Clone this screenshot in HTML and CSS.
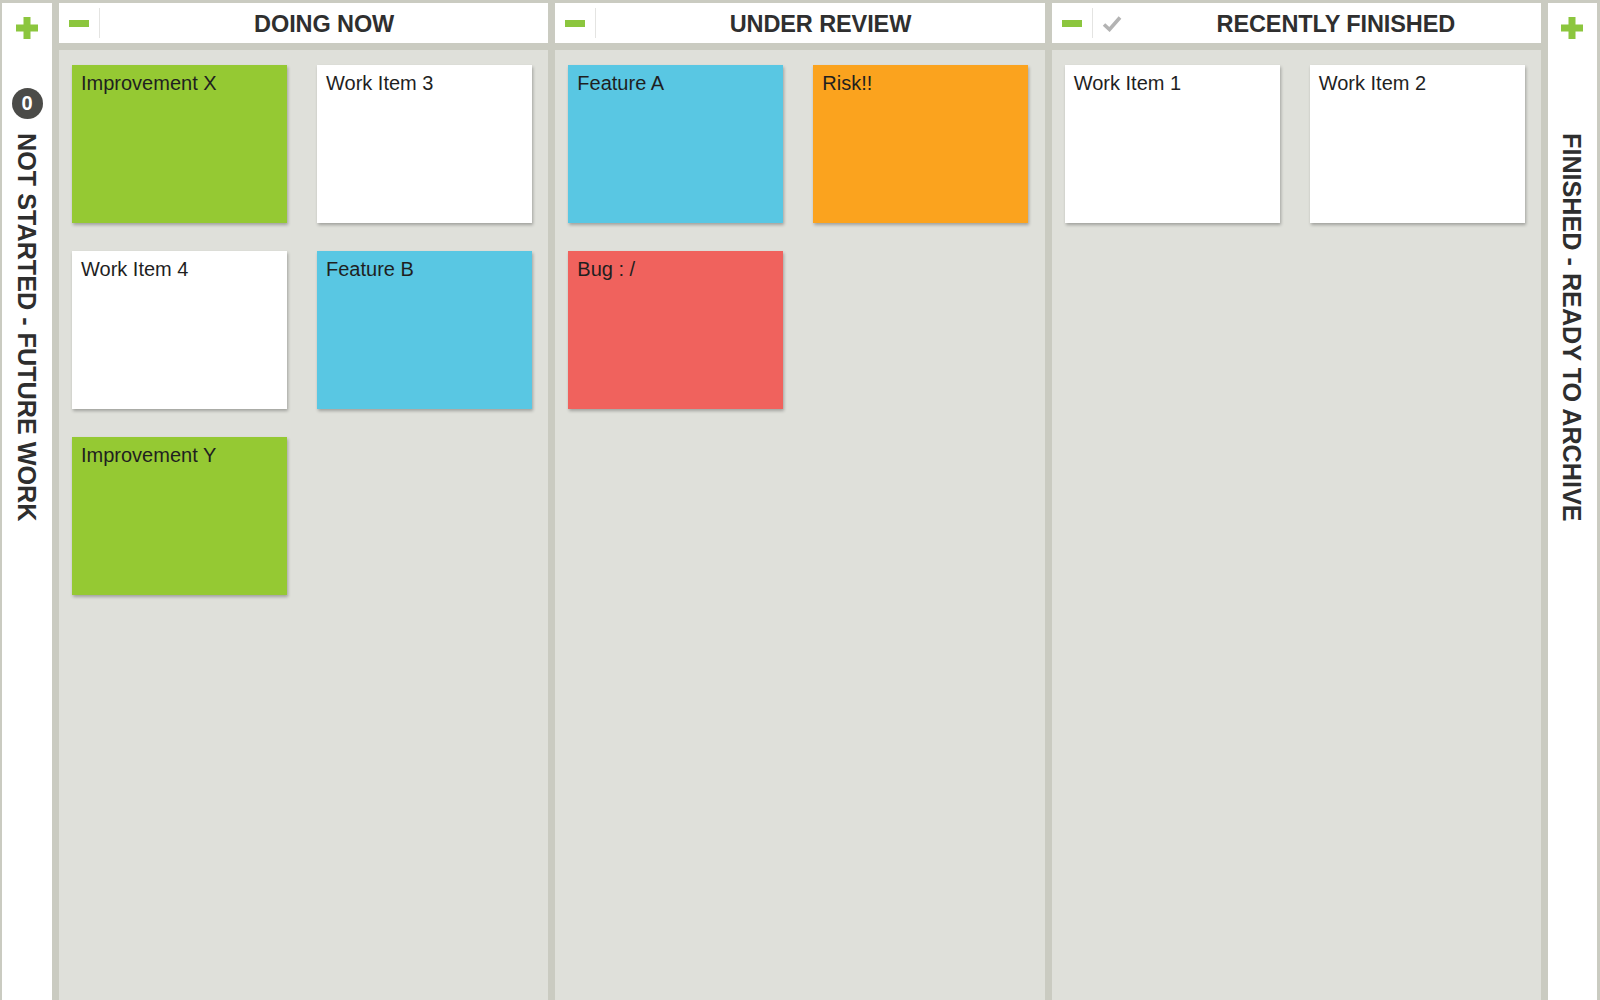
FILE: index.html
```html
<!DOCTYPE html>
<html>
<head>
<meta charset="utf-8">
<title>Kanban board</title>
<link rel="stylesheet" href="styles.css">
</head>
<body>
<div class="board">
  <aside class="side side-left">
    <svg class="plus" width="22" height="22" viewBox="0 0 22 22"><rect x="7.5" y="0" width="7" height="22"/><rect x="0" y="7.5" width="22" height="7"/></svg>
    <div class="badge">0</div>
    <div class="side-title side-title-left">NOT STARTED - FUTURE WORK</div>
  </aside>

  <section class="col">
    <header class="col-head">
      <div class="hbtn"><span class="minus"></span></div>
      <div class="col-title">DOING NOW</div>
    </header>
    <div class="col-body">
      <div class="card green">Improvement X</div>
      <div class="card white">Work Item 3</div>
      <div class="card white">Work Item 4</div>
      <div class="card blue">Feature B</div>
      <div class="card green">Improvement Y</div>
    </div>
  </section>

  <section class="col">
    <header class="col-head">
      <div class="hbtn"><span class="minus"></span></div>
      <div class="col-title">UNDER REVIEW</div>
    </header>
    <div class="col-body">
      <div class="card blue">Feature A</div>
      <div class="card orange">Risk!!</div>
      <div class="card red">Bug : /</div>
    </div>
  </section>

  <section class="col">
    <header class="col-head">
      <div class="hbtn"><span class="minus"></span></div>
      <div class="hcheck">
        <svg width="20" height="17" viewBox="0 0 20 17"><path d="M2 9.5 L7.5 14.5 L18 2.5" fill="none" stroke="#b3b3b3" stroke-width="3.6" stroke-linejoin="miter"/></svg>
      </div>
      <div class="col-title col-title-3">RECENTLY FINISHED</div>
    </header>
    <div class="col-body">
      <div class="card white">Work Item 1</div>
      <div class="card white">Work Item 2</div>
    </div>
  </section>

  <aside class="side side-right">
    <svg class="plus" width="22" height="22" viewBox="0 0 22 22"><rect x="7.5" y="0" width="7" height="22"/><rect x="0" y="7.5" width="22" height="7"/></svg>
    <div class="side-title side-title-right">FINISHED - READY TO ARCHIVE</div>
  </aside>
</div>
</body>
</html>
```

FILE: styles.css
```css
html, body {
  margin: 0;
  padding: 0;
  height: 1000px;
  overflow: hidden;
}

body {
  background: #cacbc1;
  font-family: "Liberation Sans", Arial, sans-serif;
}

.board {
  display: flex;
  height: 1000px;
  padding: 3px 3px 0 2px;
  box-sizing: border-box;
  gap: 7px;
}

.side {
  width: 50px;
  flex: none;
  background: #ffffff;
  display: flex;
  flex-direction: column;
  align-items: center;
  padding-top: 14px;
  box-sizing: border-box;
}

.side-right {
  width: 49px;
}

.plus {
  fill: #8cc63e;
  display: block;
}

.badge {
  margin-top: 49px;
  width: 31px;
  height: 31px;
  border-radius: 50%;
  background: #4b4b48;
  color: #ffffff;
  font-weight: bold;
  font-size: 20px;
  line-height: 31px;
  text-align: center;
}

.side-title {
  writing-mode: vertical-rl;
  font-weight: bold;
  font-size: 25.2px;
  color: #2e2e2e;
  white-space: nowrap;
  line-height: 28px;
}

.side-title-left {
  margin-top: 14px;
}

.side-title-right {
  margin-top: 94px;
}

.col {
  flex: 1;
  display: flex;
  flex-direction: column;
  gap: 7px;
  min-width: 0;
}

.col-head {
  height: 40px;
  flex: none;
  background: #ffffff;
  display: flex;
  align-items: center;
}

.hbtn {
  width: 40px;
  height: 30px;
  flex: none;
  display: flex;
  align-items: center;
  justify-content: center;
  border-right: 1px solid #e4e4e2;
}

.minus {
  display: block;
  width: 20px;
  height: 7px;
  background: #8cc63e;
}

.hcheck {
  width: 38px;
  height: 30px;
  flex: none;
  display: flex;
  align-items: center;
  justify-content: center;
}

.col-title {
  flex: 1;
  text-align: center;
  font-weight: bold;
  font-size: 23.5px;
  color: #2f2f2f;
  letter-spacing: -0.1px;
  padding-top: 2px;
}

.col-body {
  flex: 1;
  background: #dfe0da;
  display: grid;
  grid-template-columns: 215px 215px;
  grid-auto-rows: 158px;
  column-gap: 30px;
  row-gap: 28px;
  align-content: start;
  padding: 15px 13px;
}

.card {
  box-shadow: 1px 2px 3px rgba(0, 0, 0, 0.28);
  padding: 7px 9px 5px;
  font-size: 20px;
  color: #1f1f1f;
  line-height: 23px;
}

.green { background: #95c933; }
.white { background: #ffffff; }
.blue { background: #59c7e3; }
.orange { background: #fba31e; }
.red { background: #f0625d; }
```
